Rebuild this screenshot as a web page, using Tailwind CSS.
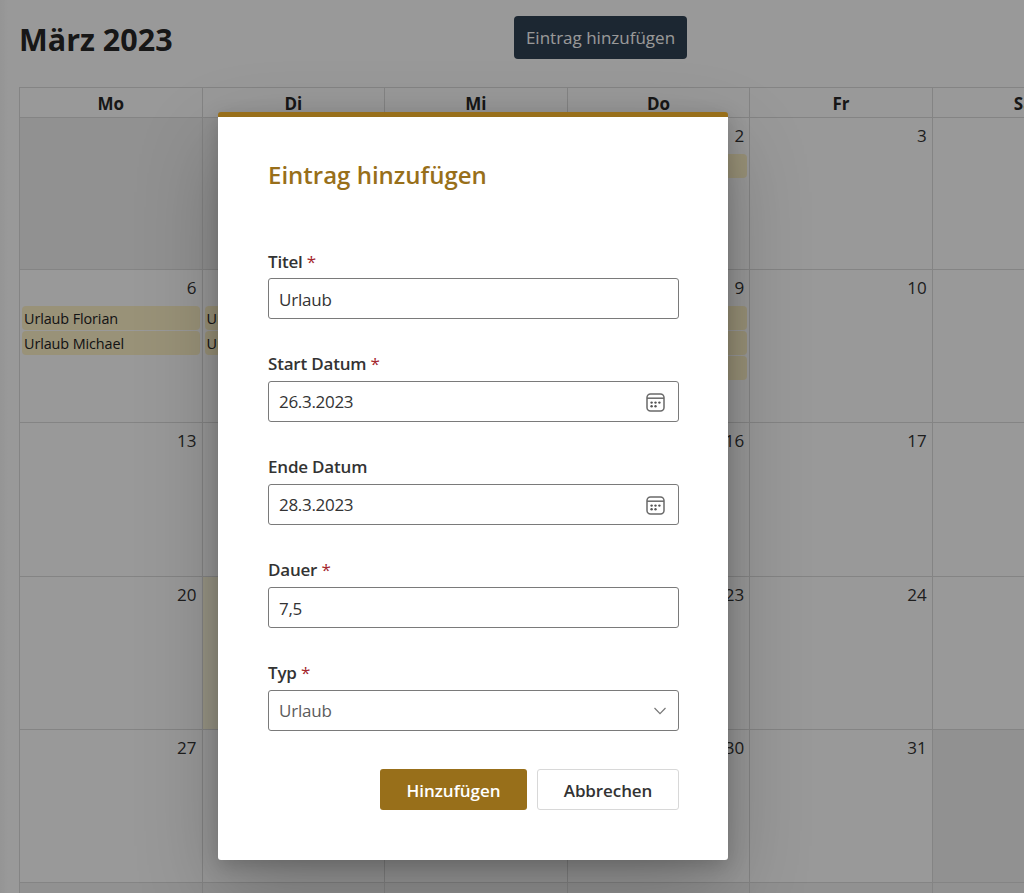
<!DOCTYPE html>
<html lang="de">
<head>
<meta charset="utf-8">
<title>Kalender</title>
<script src="https://cdn.jsdelivr.net/npm/@tailwindcss/browser@4"></script>
</head>
<body class="relative h-[893px] w-[1024px] overflow-hidden bg-white font-['Open_Sans','Noto_Sans',sans-serif] text-[#333]">
<main class="h-[893px] w-[1024px] overflow-hidden bg-linear-to-r from-[#f8f8f8] to-white to-[8px] pl-[19px]">
  <header class="flex h-[87px] items-start">
    <h1 class="mt-[17px] w-[495px] text-[30.5px]/[44px] font-bold text-[#272727]">März 2023</h1>
    <button class="mt-4 h-[43px] w-[173px] rounded-[4px] bg-[#2f4154] pt-px text-[17px] whitespace-nowrap text-white">Eintrag hinzufügen</button>
  </header>
  <table class="w-[1279px] table-fixed border-collapse [&_td]:border [&_td]:border-[#ddd] [&_td]:p-0 [&_td]:align-top [&_th]:border [&_th]:border-[#ddd]">
    <thead>
      <tr class="h-[30px] text-[17px]/[24px] font-bold text-[#272727]"><th class="pt-1 pb-px">Mo</th><th class="pt-1 pb-px">Di</th><th class="pt-1 pb-px">Mi</th><th class="pt-1 pb-px">Do</th><th class="pt-1 pb-px">Fr</th><th class="pt-1 pb-px">Sa</th><th class="pt-1 pb-px">So</th></tr>
    </thead>
    <tbody id="weeks"></tbody>
  </table>
</main>

<div class="absolute inset-0 bg-black/40"></div>

<section role="dialog" class="absolute top-[112px] left-[218px] flex h-[748px] w-[510px] flex-col rounded-[3px] border-t-[5px] border-[#986f1a] bg-white pt-[42px] pr-[49px] pl-[50px] shadow-[0_33px_84px_rgba(0,0,0,0.24),0_6px_20px_rgba(0,0,0,0.18)]">
  <h2 class="mb-[59px] text-[24px]/[32px] font-semibold text-[#986f1a]">Eintrag hinzufügen</h2>
  <form class="flex flex-col gap-[33px] text-[17px]/[24px]">
    <div>
      <div class="mb-[4px] font-semibold tracking-[-0.2px]">Titel <span class="font-normal text-[#a4262c]">*</span></div>
      <div class="flex h-[41px] items-center rounded-[3px] border border-[#7a7a7a] px-[10px] pt-[2px] tracking-[-0.2px]">Urlaub</div>
    </div>
    <div>
      <div class="mb-[5px] font-semibold tracking-[-0.2px]">Start Datum <span class="font-normal text-[#a4262c]">*</span></div>
      <div class="flex h-[41px] items-center justify-between rounded-[3px] border border-[#7a7a7a] pr-[13px] pl-[10px] tracking-[-0.3px]">26.3.2023
        <svg class="mt-[2px] size-[19px]" viewBox="0 0 19 19" fill="none" stroke="#6a6a6a" stroke-width="1.5"><rect x="1" y="1" width="17" height="17" rx="3.5"/><path d="M1 5.200h17"/><g fill="#555" stroke="none"><circle cx="5.6" cy="9.6" r="1.2"/><circle cx="9.5" cy="9.6" r="1.2"/><circle cx="13.4" cy="9.6" r="1.2"/><circle cx="5.6" cy="13.3" r="1.2"/><circle cx="9.5" cy="13.3" r="1.2"/></g></svg>
      </div>
    </div>
    <div>
      <div class="mb-[5px] font-semibold tracking-[-0.2px]">Ende Datum</div>
      <div class="flex h-[41px] items-center justify-between rounded-[3px] border border-[#7a7a7a] pr-[13px] pl-[10px] tracking-[-0.3px]">28.3.2023
        <svg class="mt-[2px] size-[19px]" viewBox="0 0 19 19" fill="none" stroke="#6a6a6a" stroke-width="1.5"><rect x="1" y="1" width="17" height="17" rx="3.5"/><path d="M1 5.200h17"/><g fill="#555" stroke="none"><circle cx="5.6" cy="9.6" r="1.2"/><circle cx="9.5" cy="9.6" r="1.2"/><circle cx="13.4" cy="9.6" r="1.2"/><circle cx="5.6" cy="13.3" r="1.2"/><circle cx="9.5" cy="13.3" r="1.2"/></g></svg>
      </div>
    </div>
    <div>
      <div class="mb-[5px] font-semibold tracking-[-0.2px]">Dauer <span class="font-normal text-[#a4262c]">*</span></div>
      <div class="flex h-[41px] items-center rounded-[3px] border border-[#7a7a7a] px-[10px] pt-[2px] tracking-[-0.3px]">7,5</div>
    </div>
    <div>
      <div class="mb-[5px] font-semibold tracking-[-0.2px]">Typ <span class="font-normal text-[#a4262c]">*</span></div>
      <div class="flex h-[41px] items-center justify-between rounded-[3px] border border-[#7a7a7a] pr-[12px] pl-[10px] tracking-[-0.2px] text-[#5c5c5c]">Urlaub
        <svg class="h-[8px] w-[12px]" viewBox="0 0 12 8" fill="none" stroke="#777" stroke-width="1.2"><path d="M.5 1 6 6.600 11.500 1"/></svg>
      </div>
    </div>
  </form>
  <footer class="mt-[38px] flex justify-end gap-[10px] text-[17px] font-semibold">
    <button class="h-[41px] w-[147px] rounded-[3px] bg-[#986f1a] pt-[2px] text-white">Hinzufügen</button>
    <button class="h-[41px] w-[142px] rounded-[3px] border border-[#d8d8d8] pt-[2px] tracking-[-0.1px]">Abbrechen</button>
  </footer>
</section>

<script>
const outside = [0, 1, 33, 34, 35, 36, 37, 38, 39, 40, 41];
const events = {
  3: [''],
  7: ['Urlaub Florian', 'Urlaub Michael'],
  8: ['Urlaub Florian', 'Urlaub Michael'],
  10: ['', '', '']
};
const today = 22;
const weeks = document.getElementById('weeks');
for (let w = 0; w < 6; w++) {
  const row = document.createElement('tr');
  row.className = w === 0 ? 'h-[152px]' : 'h-[153.300px]';
  for (let d = 0; d < 7; d++) {
    const i = w * 7 + d;
    const cell = document.createElement('td');
    const off = outside.includes(i);
    cell.className = off ? 'bg-[#f2f2f2]' : i === today ? 'bg-[#fffadf]' : '';
    if (!off) {
      cell.innerHTML = `<div class="pt-[6px] pr-[5px] text-right text-[17px]/[24px]">${i - 1}</div>` +
        `<div class="mx-[2px] mt-[6px] flex flex-col gap-[1px]">` +
        (events[i] || []).map(t => `<div class="h-[24px] rounded-[4px] bg-[#fff3c9] pl-[2px] text-[14.400px]/[26px] tracking-[-0.1px] text-[#222]">${t}</div>`).join('') + '</div>';
    }
    row.append(cell);
  }
  weeks.append(row);
}
</script>
</body>
</html>
